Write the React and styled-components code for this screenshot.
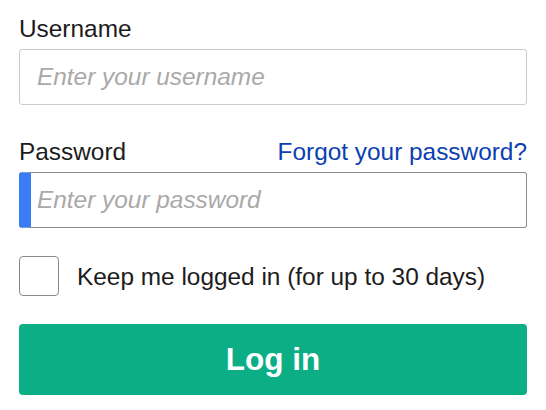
import React from 'react';
import styled, { createGlobalStyle } from 'styled-components';

const GlobalStyle = createGlobalStyle`
  html, body {
    margin: 0;
    padding: 0;
    background: #ffffff;
  }
  body {
    font-family: "Liberation Sans", Arial, Helvetica, sans-serif;
  }
`;

const Form = styled.form`
  width: 508px;
  padding: 14px 19px 0 19px;
  display: flex;
  flex-direction: column;
`;

const Field = styled.div`
  display: flex;
  flex-direction: column;
  gap: 6px;
  margin-bottom: ${props => props.spacing || 0}px;
`;

const LabelRow = styled.div`
  display: flex;
  align-items: baseline;
  justify-content: space-between;
`;

const Label = styled.label`
  font-size: 24.4px;
  line-height: 29px;
  color: #1c1c1c;
`;

const ForgotLink = styled.a`
  font-size: 24.4px;
  line-height: 29px;
  color: #0c3fb0;
  text-decoration: none;
  cursor: pointer;
`;

const Input = styled.input`
  box-sizing: border-box;
  width: 100%;
  height: 56px;
  margin: 0;
  padding: 0 16px 0 ${props => (props.focused ? 6 : 17)}px;
  border: 1px solid ${props => (props.focused ? '#8c8c8c' : '#cccccc')};
  border-left: ${props => (props.focused ? '12px solid #3a7cf6' : '1px solid #cccccc')};
  border-radius: 3px;
  font-family: "Liberation Sans", Arial, Helvetica, sans-serif;
  font-size: 24.4px;
  color: #222;
  outline: none;

  &::placeholder {
    color: #a9a9a9;
    font-style: italic;
  }
`;

const CheckRow = styled.label`
  display: flex;
  align-items: center;
  gap: 18px;
  margin: 28px 0 28px 0;
  font-size: 24.4px;
  line-height: 29px;
  color: #1c1c1c;
  cursor: pointer;
`;

const CheckBox = styled.span`
  box-sizing: border-box;
  width: 40px;
  height: 40px;
  flex: none;
  border: 1px solid #8a8a8a;
  border-radius: 4px;
  background: #fff;
`;

const SubmitButton = styled.button`
  box-sizing: border-box;
  width: 100%;
  height: 71px;
  border: none;
  border-radius: 4px;
  background: #0cae86;
  color: #ffffff;
  font-family: "Liberation Sans", Arial, Helvetica, sans-serif;
  font-weight: 700;
  font-size: 31.5px;
  cursor: pointer;
`;

export default function App() {
  return (
    <>
      <GlobalStyle />
      <Form onSubmit={e => e.preventDefault()}>
        <Field spacing={32}>
          <Label htmlFor="username">Username</Label>
          <Input id="username" placeholder="Enter your username" />
        </Field>
        <Field>
          <LabelRow>
            <Label htmlFor="password">Password</Label>
            <ForgotLink>Forgot your password?</ForgotLink>
          </LabelRow>
          <Input id="password" type="password" focused placeholder="Enter your password" />
        </Field>
        <CheckRow>
          <CheckBox />
          Keep me logged in (for up to 30 days)
        </CheckRow>
        <SubmitButton type="submit">Log in</SubmitButton>
      </Form>
    </>
  );
}
